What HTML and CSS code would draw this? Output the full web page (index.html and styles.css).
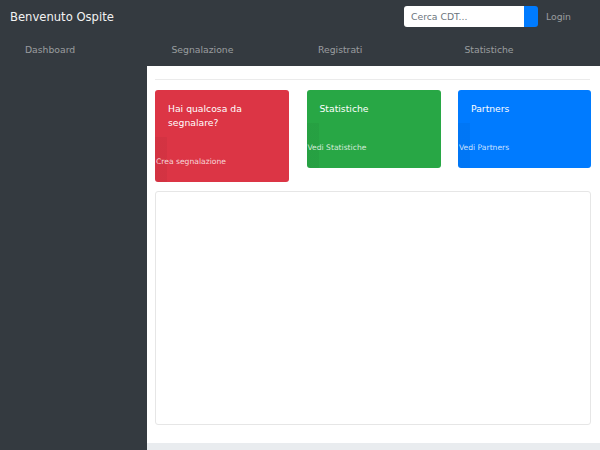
FILE: index.html
```html
<!DOCTYPE html>
<html lang="it">
<head>
<meta charset="utf-8">
<title>Benvenuto Ospite</title>
<link rel="stylesheet" href="styles.css">
</head>
<body>
<header class="topbar">
  <span class="brand">Benvenuto Ospite</span>
  <form class="search">
    <input class="search-input" type="text" placeholder="Cerca CDT...">
    <button class="search-btn" type="button"></button>
  </form>
  <a class="login" href="#">Login</a>
</header>
<nav class="mainnav">
  <a href="#">Dashboard</a>
  <a href="#">Segnalazione</a>
  <a href="#">Registrati</a>
  <a href="#">Statistiche</a>
</nav>
<div class="layout">
  <aside class="sidebar"></aside>
  <div class="main-col">
    <main class="content">
      <hr class="divider">
      <div class="cards">
        <div class="card card-red">
          <div class="card-title">Hai qualcosa da segnalare?</div>
          <div class="card-foot"><a href="#">Crea segnalazione</a></div>
        </div>
        <div class="card card-green">
          <div class="card-title">Statistiche</div>
          <div class="card-foot"><a href="#">Vedi Statistiche</a></div>
        </div>
        <div class="card card-blue">
          <div class="card-title">Partners</div>
          <div class="card-foot"><a href="#">Vedi Partners</a></div>
        </div>
      </div>
      <div class="panel"></div>
    </main>
    <footer class="footer"></footer>
  </div>
</div>
</body>
</html>
```
FILE: styles.css
```css
* { box-sizing: border-box; }
html, body { margin: 0; padding: 0; }
body {
  width: 600px;
  height: 450px;
  overflow: hidden;
  background: #343a40;
  font-family: "DejaVu Sans", "Liberation Sans", sans-serif;
  font-size: 9.25px;
  color: #fff;
}
a { text-decoration: none; }

.topbar {
  height: 33px;
  display: flex;
  align-items: center;
  padding: 0 29px 0 10px;
}
.brand {
  font-size: 11.6px;
  color: #f2f2f2;
  flex: 1;
}
.search {
  display: flex;
  margin: 0;
}
.search-input {
  width: 120px;
  height: 21px;
  border: none;
  border-radius: 3px 0 0 3px;
  padding: 0 7px;
  font-family: inherit;
  font-size: 9.25px;
  color: #495057;
  background: #fff;
  outline: none;
}
.search-input::placeholder { color: #6c757d; }
.search-btn {
  width: 14px;
  height: 21px;
  border: none;
  padding: 0;
  background: #007bff;
  border-radius: 0 3px 3px 0;
}
.login {
  margin-left: 8px;
  color: rgba(255,255,255,.5);
}

.mainnav {
  height: 33px;
  display: grid;
  grid-template-columns: repeat(4, 146.5px);
  align-items: center;
}
.mainnav a {
  padding-left: 25px;
  color: rgba(255,255,255,.5);
}

.layout {
  display: flex;
  height: 384px;
}
.sidebar {
  width: 147px;
  flex: none;
}
.main-col {
  flex: 1;
  display: flex;
  flex-direction: column;
}
.content {
  height: 377px;
  background: #fff;
  padding: 13px 9px 0 8px;
}
.footer {
  flex: 1;
  background: #e9ecef;
}
.divider {
  margin: 0 1px 10px 0;
  border: none;
  border-top: 1px solid rgba(0,0,0,.08);
  height: 0;
}
.cards {
  display: grid;
  grid-template-columns: 134px 134px 133px;
  justify-content: space-between;
  align-items: start;
}
.card {
  border-radius: 3px;
  padding-top: 12px;
  color: #fff;
}
.card-red { background: #dc3545; }
.card-green { background: #28a745; }
.card-blue { background: #007bff; }
.card-title {
  padding: 0 13px;
  line-height: 14px;
  margin-bottom: 7px;
}
.card-foot {
  padding: 19px 0 15px 1px;
  line-height: 11px;
  font-size: 7.6px;
  background: linear-gradient(to right, rgba(0,0,0,.04) 12px, transparent 12px);
  border-radius: 0 0 0 3px;
}
.card-foot a { color: rgba(255,255,255,.8); }
.panel {
  margin-top: 9px;
  height: 234px;
  border: 1px solid #e6e6e6;
  border-radius: 3px;
}
```
